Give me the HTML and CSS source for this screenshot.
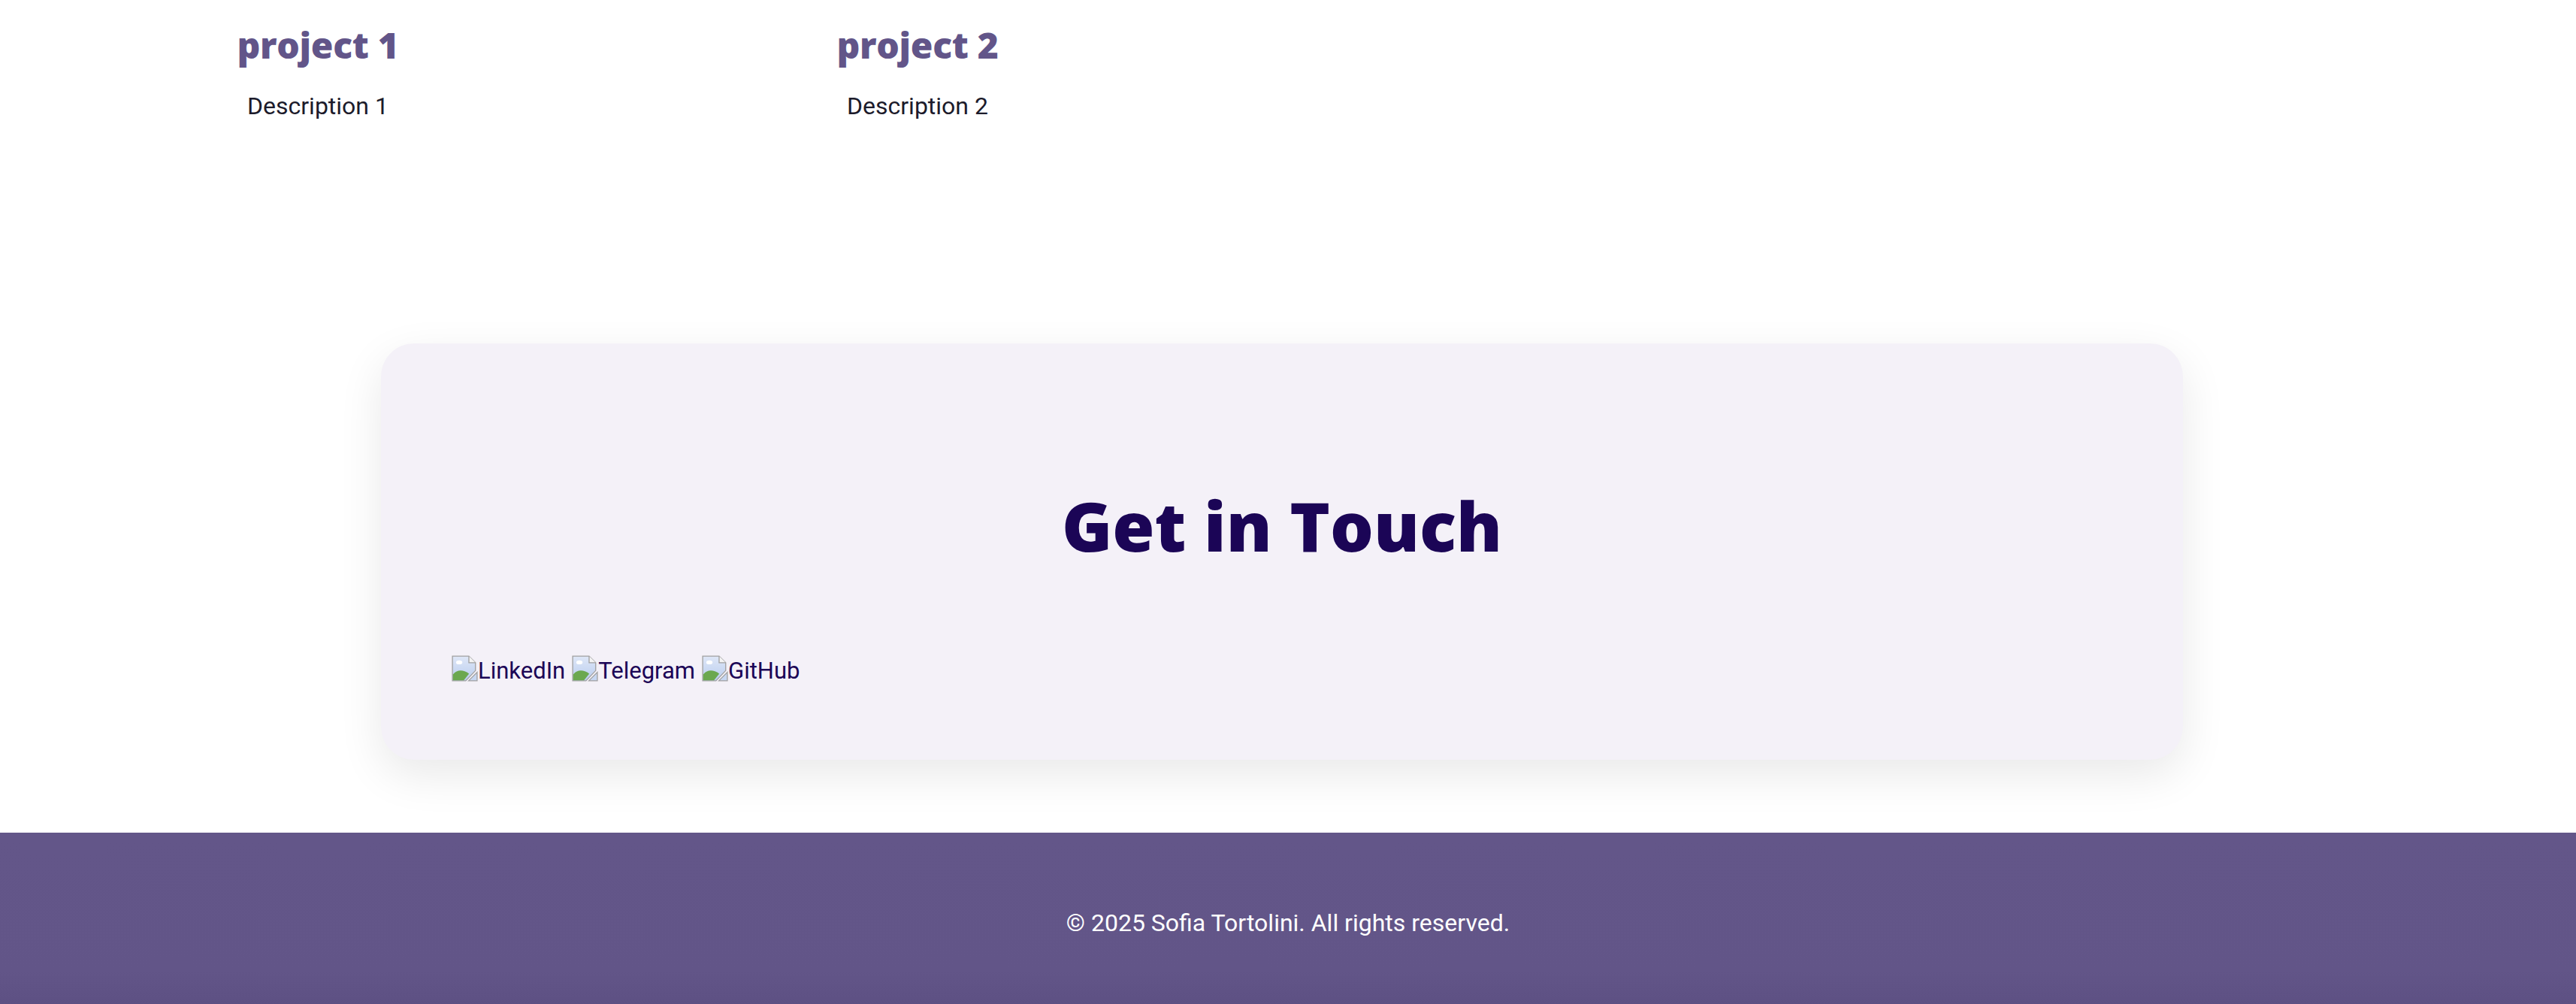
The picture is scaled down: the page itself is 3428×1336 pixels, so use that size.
FILE: index.html
```html
<!DOCTYPE html>
<html lang="en">
<head>
<meta charset="utf-8">
<title>Sofia Tortolini</title>
<link rel="stylesheet" href="styles.css">
</head>
<body>
<main class="page">
  <section class="projects">
    <div class="project">
      <h3 class="project-title">project 1</h3>
      <p class="project-desc">Description 1</p>
    </div>
    <div class="project">
      <h3 class="project-title">project 2</h3>
      <p class="project-desc">Description 2</p>
    </div>
  </section>

  <section class="contact">
    <h2 class="contact-title">Get in Touch</h2>
    <div class="social">
      <a class="social-link" href="#"><svg class="broken" viewBox="0 0 16 16" width="35" height="35"><defs><linearGradient id="sky1" x1="0" y1="0" x2="0" y2="1"><stop offset="0" stop-color="#dfe7f7"/><stop offset="1" stop-color="#b9cdef"/></linearGradient></defs><path d="M0.5 0.5H10.5L14.5 4.5V9.3L8.6 15.5H0.5Z" fill="url(#sky1)" stroke="#a0a0a0" stroke-width="0.6"/><path d="M10.5 0.5V4.5H14.5" fill="#f4f4f4" stroke="#a0a0a0" stroke-width="0.6"/><ellipse cx="4.6" cy="4.3" rx="1.9" ry="1.2" fill="#fff"/><path d="M0.8 15.2V11.6Q4.8 7.2 10.6 11.2L7.4 15.2Z" fill="#6ba84f"/><path d="M10.3 15.5L15.5 10.3V15.5Z" fill="#c7d7f2" stroke="#a0a0a0" stroke-width="0.6"/></svg>LinkedIn</a>
      <a class="social-link" href="#"><svg class="broken" viewBox="0 0 16 16" width="35" height="35"><defs><linearGradient id="sky2" x1="0" y1="0" x2="0" y2="1"><stop offset="0" stop-color="#dfe7f7"/><stop offset="1" stop-color="#b9cdef"/></linearGradient></defs><path d="M0.5 0.5H10.5L14.5 4.5V9.3L8.6 15.5H0.5Z" fill="url(#sky2)" stroke="#a0a0a0" stroke-width="0.6"/><path d="M10.5 0.5V4.5H14.5" fill="#f4f4f4" stroke="#a0a0a0" stroke-width="0.6"/><ellipse cx="4.6" cy="4.3" rx="1.9" ry="1.2" fill="#fff"/><path d="M0.8 15.2V11.6Q4.8 7.2 10.6 11.2L7.4 15.2Z" fill="#6ba84f"/><path d="M10.3 15.5L15.5 10.3V15.5Z" fill="#c7d7f2" stroke="#a0a0a0" stroke-width="0.6"/></svg>Telegram</a>
      <a class="social-link" href="#"><svg class="broken" viewBox="0 0 16 16" width="35" height="35"><defs><linearGradient id="sky3" x1="0" y1="0" x2="0" y2="1"><stop offset="0" stop-color="#dfe7f7"/><stop offset="1" stop-color="#b9cdef"/></linearGradient></defs><path d="M0.5 0.5H10.5L14.5 4.5V9.3L8.6 15.5H0.5Z" fill="url(#sky3)" stroke="#a0a0a0" stroke-width="0.6"/><path d="M10.5 0.5V4.5H14.5" fill="#f4f4f4" stroke="#a0a0a0" stroke-width="0.6"/><ellipse cx="4.6" cy="4.3" rx="1.9" ry="1.2" fill="#fff"/><path d="M0.8 15.2V11.6Q4.8 7.2 10.6 11.2L7.4 15.2Z" fill="#6ba84f"/><path d="M10.3 15.5L15.5 10.3V15.5Z" fill="#c7d7f2" stroke="#a0a0a0" stroke-width="0.6"/></svg>GitHub</a>
    </div>
  </section>
</main>

<footer class="footer">
  <p class="footer-text">© 2025 Sofia Tortolini. All rights reserved.</p>
</footer>
</body>
</html>
```

FILE: styles.css
```css
* {
  box-sizing: border-box;
}

html, body {
  margin: 0;
  padding: 0;
  background: #ffffff;
}

body {
  font-family: Roboto, "Liberation Sans", Arial, sans-serif;
  color: #1c1b2b;
}

.page {
  display: flex;
  flex-direction: column;
}

.projects {
  display: grid;
  grid-template-columns: 798px 798px;
  padding-left: 24px;
  padding-top: 30px;
}

.project {
  display: flex;
  flex-direction: column;
  align-items: center;
}

.project-title {
  margin: 0;
  font-family: "Open Sans", "DejaVu Sans", sans-serif;
  font-weight: 800;
  font-size: 48px;
  line-height: 60px;
  color: #625589;
  letter-spacing: -0.3px;
}

.project-desc {
  margin: 33px 0 0;
  font-size: 32px;
  line-height: 36px;
  color: #1c1b2b;
}

.contact {
  width: 2398px;
  margin: 298px 0 0 507px;
  padding: 187px 94px 100px;
  background: #f4f1f8;
  border-radius: 44px;
  box-shadow: 0 20px 60px rgba(0, 0, 0, 0.09);
}

.contact-title {
  margin: 0;
  text-align: center;
  font-family: "Open Sans", "DejaVu Sans", sans-serif;
  font-weight: 800;
  font-size: 91px;
  line-height: 110px;
  color: #1b0556;
}

.social {
  margin-top: 118px;
  font-size: 31px;
  line-height: 36px;
  display: flex;
  gap: 9px;
}

.social-link {
  color: #1b0556;
  text-decoration: none;
  display: inline-flex;
  align-items: flex-end;
}

.broken {
  display: block;
  margin-bottom: 4px;
}

.footer {
  margin-top: 97px;
  padding: 100px 0 90px;
  background: linear-gradient(#635689 0%, #625588 80%, #5d5083 100%);
  text-align: center;
}

.footer-text {
  margin: 0;
  color: #ffffff;
  font-size: 32px;
  line-height: 40px;
}
```
